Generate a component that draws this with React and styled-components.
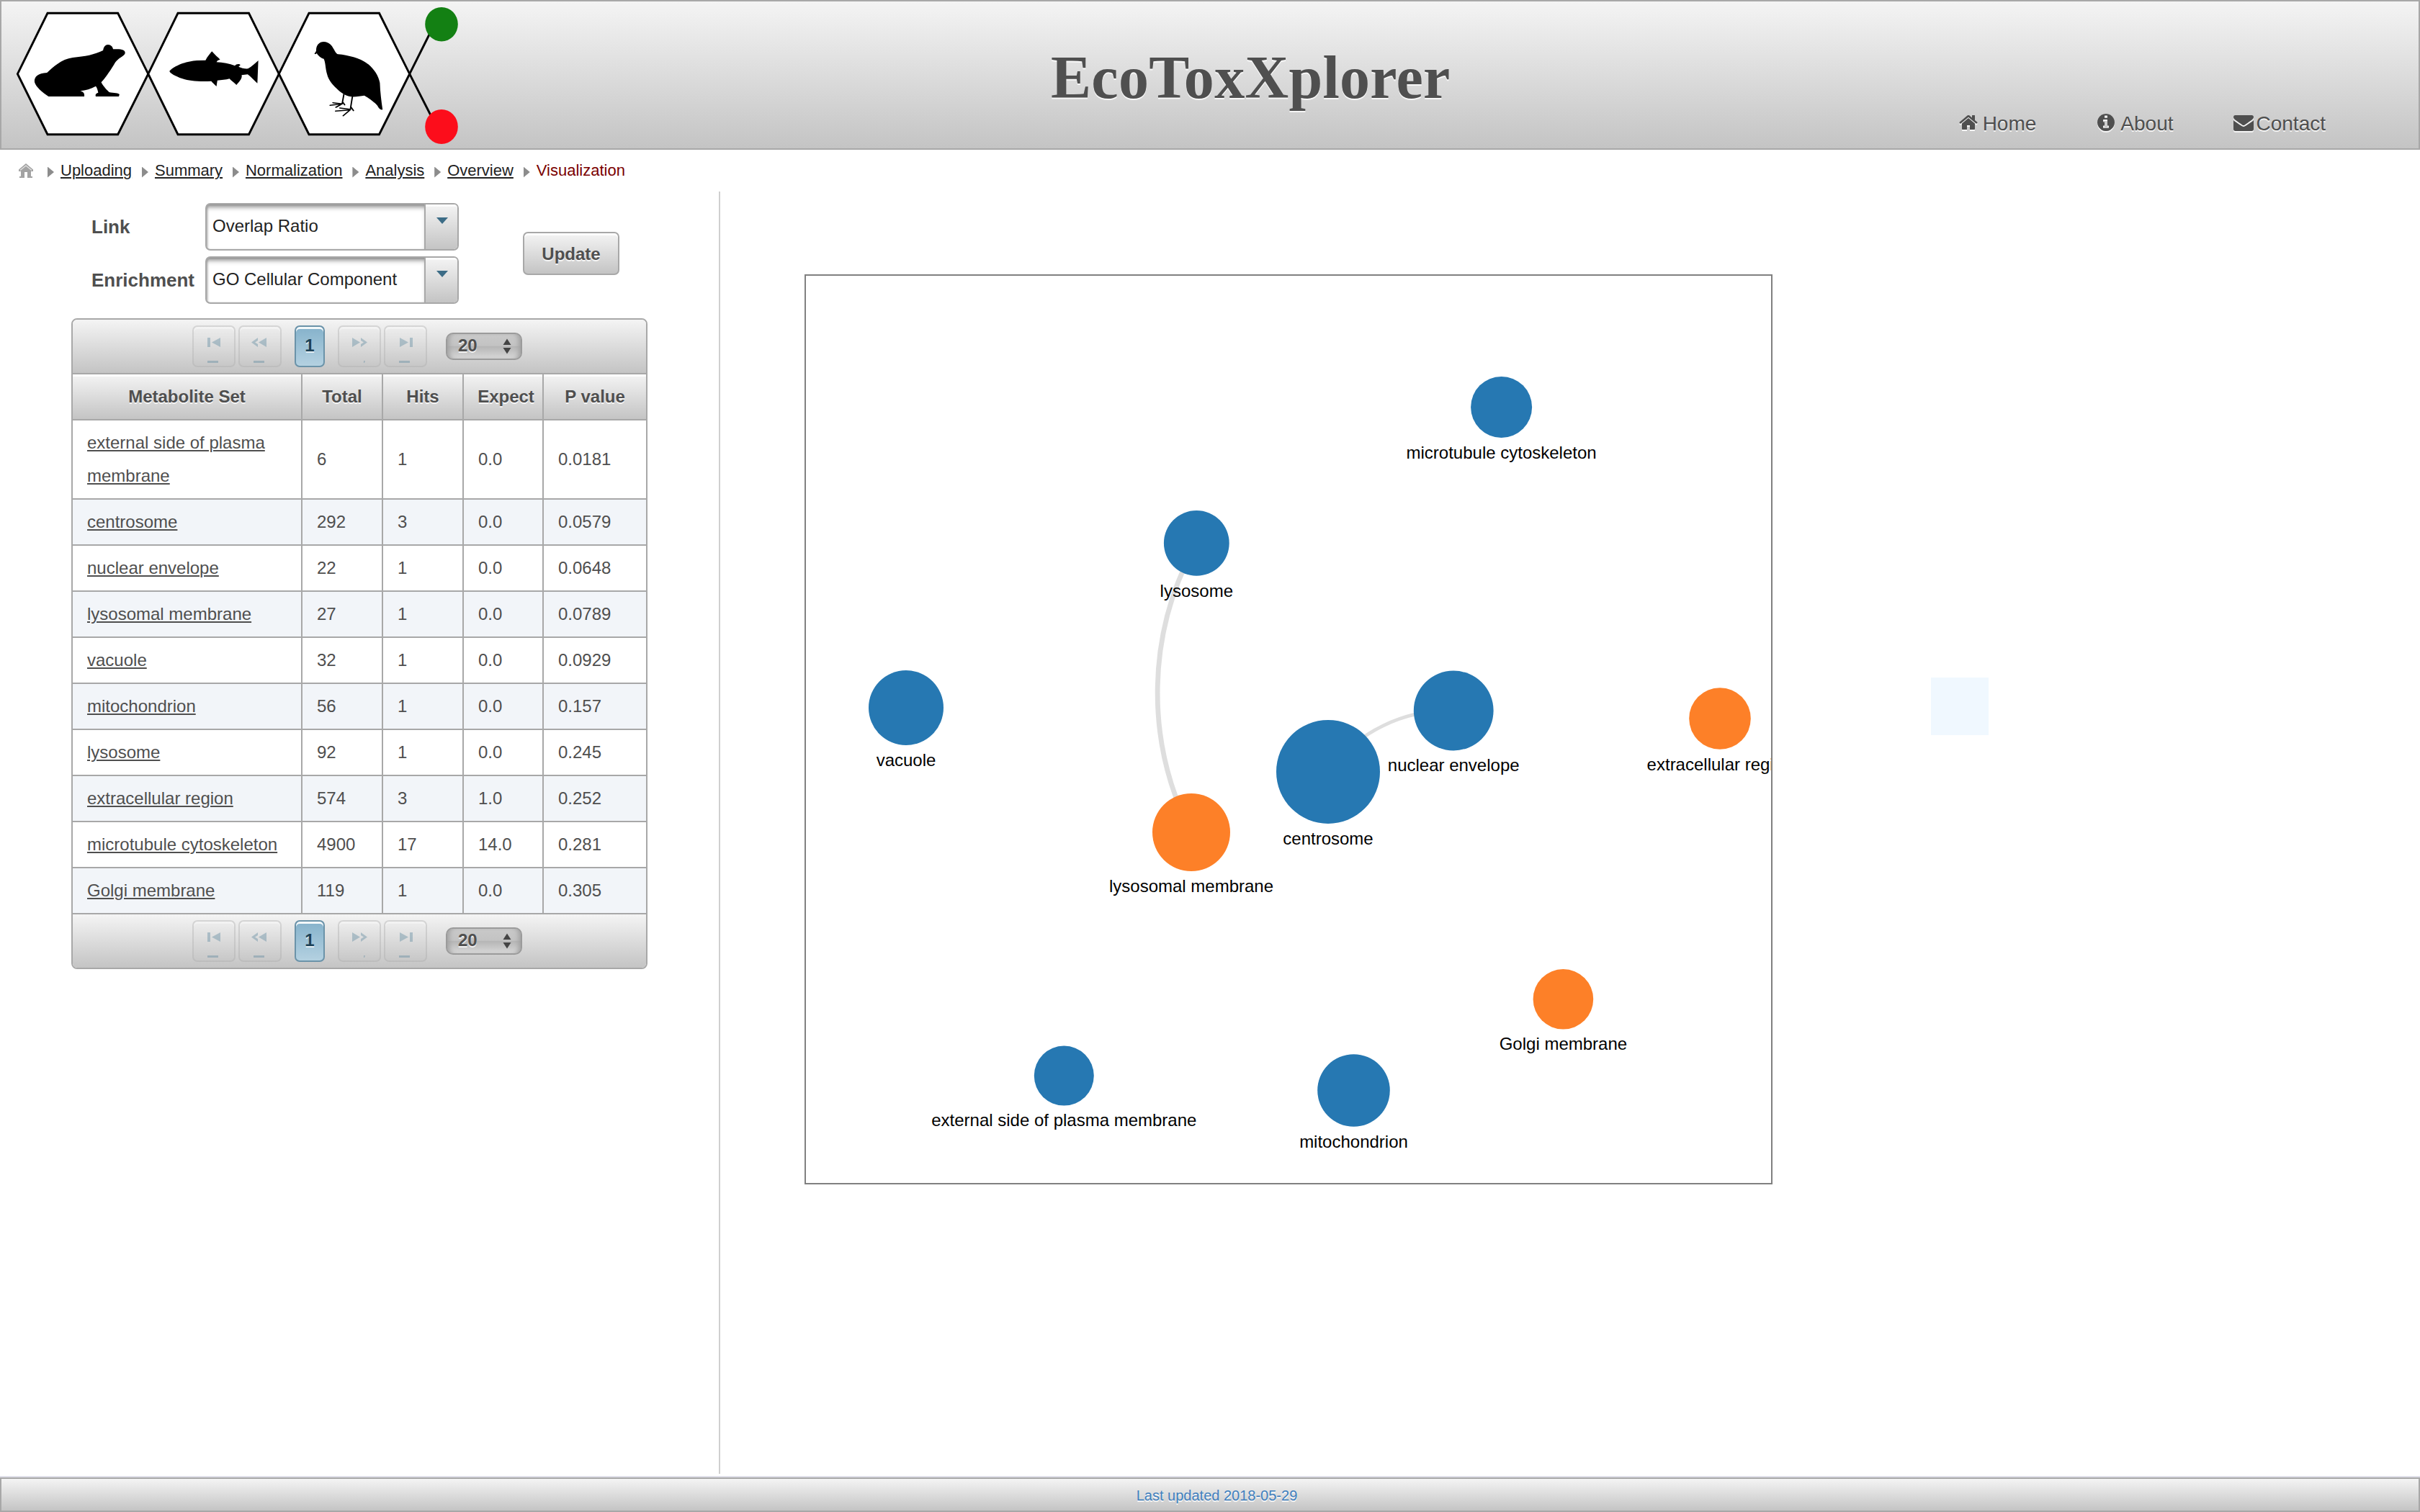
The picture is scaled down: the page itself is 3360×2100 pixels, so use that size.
import React from "react";
import styled, { createGlobalStyle, css } from "styled-components";

const GlobalStyle = createGlobalStyle`
  body {
    margin: 0;
    background: #fff;
    font-family: "Liberation Sans", Arial, sans-serif;
    color: #4f4f4f;
  }
  *, *::before, *::after { box-sizing: border-box; }
`;

const metal = css`
  background: linear-gradient(to bottom, #f4f4f4 0%, #dcdcdc 50%, #c4c4c4 100%);
`;

const Page = styled.div`
  display: flex;
  flex-direction: column;
  height: 2100px;
  overflow: hidden;
`;

const Header = styled.header`
  ${metal}
  display: flex;
  flex: none;
  height: 208px;
  border: 2px solid #a8a8a8;
`;

const LogoArt = styled.svg`
  display: block;
  flex: none;
  width: 650px;
  height: 204px;
`;

const Title = styled.h1`
  margin: 59px 0 0 807px;
  font: bold 84px/94px "Liberation Serif", "Times New Roman", serif;
  letter-spacing: 0.3px;
  color: #4f4f4f;
  text-shadow: 0 2px 0 rgba(255, 255, 255, 0.8);
`;

const Nav = styled.nav`
  display: flex;
  align-items: center;
  height: 32px;
  margin: 152px 129px 0 auto;
`;

const NavLink = styled.a`
  display: flex;
  align-items: center;
  gap: ${(p) => p.$gap}px;
  margin-left: ${(p) => p.$lead}px;
  font-size: 28px;
  line-height: 32px;
  text-shadow: 0 2px 0 rgba(255, 255, 255, 0.8);
`;

const NavText = styled.span`
  padding-top: 4px;
`;

const NavIcon = styled.svg`
  width: 28px;
  height: 28px;
  fill: #4f4f4f;
  filter: drop-shadow(0 2px 0 rgba(255, 255, 255, 0.8));
`;

const Trail = styled.nav`
  display: flex;
  flex: none;
  align-items: center;
  height: 58px;
  padding-left: 26px;
  font-size: 22px;
`;

const HomeMark = styled.svg`
  width: 20px;
  height: 20px;
  margin-right: 20px;
`;

const TrailArrow = styled.span`
  width: 9px;
  height: 15px;
  margin: 4px 9px 0 0;
  background: #8c8c8c;
  clip-path: polygon(0 0, 100% 50%, 0 100%);
`;

const Crumb = styled.a`
  margin-right: 13.9px;
  color: ${(p) => (p.$current ? "#7a0000" : "#222")};
  text-decoration: ${(p) => (p.$current ? "none" : "underline")};
  text-decoration-thickness: 2px;
  text-underline-offset: 2px;
`;

const Main = styled.main`
  display: flex;
  flex: none;
  height: 1784px;
`;

const SidePanel = styled.section`
  flex: none;
  width: 1000px;
  height: 1781px;
  padding: 16px 0 0 99px;
  border-right: 2px solid #cfcfcf;
`;

const Form = styled.div`
  display: flex;
  align-items: center;
  padding-left: 28px;
`;

const Fields = styled.div`
  display: grid;
  grid-template-columns: 158px 352px;
  row-gap: 8px;
  align-items: center;
`;

const Label = styled.label`
  font-size: 26px;
  font-weight: bold;
`;

const Select = styled.div`
  display: flex;
  height: 66px;
  border: 2px solid #a8a8a8;
  border-radius: 7px;
  overflow: hidden;
`;

const SelectText = styled.span`
  flex: 1;
  padding-left: 8px;
  font-size: 24px;
  line-height: 60px;
  color: #222;
  box-shadow: inset 0 7px 7px -4px rgba(90, 90, 90, 0.8), inset 2px 0 3px -1px rgba(90, 90, 90, 0.5);
  white-space: nowrap;
`;

const SelectTrigger = styled.span`
  ${metal}
  width: 46px;
  padding: 18px 0 0 15px;
  border-left: 2px solid #a8a8a8;
  box-shadow: inset 0 3px 0 rgba(255, 255, 255, 0.7);
`;

const Caret = styled.span`
  display: block;
  width: 16px;
  height: 9px;
  background: #3c6c86;
  clip-path: polygon(0 0, 100% 0, 50% 100%);
`;

const Button = styled.button`
  ${metal}
  width: 134px;
  height: 60px;
  margin-left: 89px;
  padding: 1px 0 0;
  border: 2px solid #a8a8a8;
  border-radius: 7px;
  box-shadow: inset 0 3px 0 rgba(255, 255, 255, 0.8);
  color: #4f4f4f;
  font: bold 24px "Liberation Sans", Arial, sans-serif;
  text-shadow: 0 2px 0 rgba(255, 255, 255, 0.8);
`;

const DataTable = styled.div`
  width: 800px;
  margin-top: 20px;
  border: 2px solid #a8a8a8;
  border-radius: 8px;
  overflow: hidden;
  font-size: 24px;
`;

const PagerBar = styled.div`
  ${metal}
  display: flex;
  align-items: center;
  height: 74px;
  padding-left: 166px;
`;

const PagerButton = styled.span`
  width: 60px;
  height: 58px;
  margin-right: ${(p) => p.$after}px;
  border: 2px solid #a8a8a8;
  border-radius: 7px;
  box-shadow: inset 0 3px 0 rgba(255, 255, 255, 0.9);
  background: linear-gradient(#eee, #c4c4c4);
  opacity: 0.36;
`;

const PagerGlyph = styled.svg`
  display: block;
  width: 56px;
  height: 54px;
  fill: #4d7d96;
`;

const PagerPage = styled.span`
  width: 42px;
  height: 58px;
  margin-right: 18px;
  border: 2px solid #6b93a9;
  border-radius: 7px;
  background: linear-gradient(#85b2cb, #b4d1e1);
  box-shadow: inset 0 3px 0 rgba(255, 255, 255, 0.9);
  color: #1c4257;
  font-weight: bold;
  line-height: 52px;
  text-align: center;
  text-shadow: 0 2px 0 rgba(255, 255, 255, 0.7);
`;

const PageSize = styled.span`
  display: flex;
  justify-content: space-between;
  align-items: center;
  width: 106px;
  height: 38px;
  padding: 0 13px 0 15px;
  border: 2px solid #9b9b9b;
  border-radius: 10px;
  background: linear-gradient(#c9c9c9 0%, #c3c3c3 48%, #b5b5b5 50%, #d8d8d8 100%);
  box-shadow: inset 7px 0 6px -4px #a2a2a2, inset -7px 0 6px -4px #a2a2a2;
  font-weight: bold;
  text-shadow: 0 2px 0 rgba(255, 255, 255, 0.8);
`;

const PageSizeValue = styled.span`
  padding-bottom: 3px;
  line-height: 30px;
`;

const PageSizeArrows = styled.svg`
  width: 12px;
  height: 22px;
  fill: #444;
`;

const Row = styled.div`
  display: grid;
  grid-template-columns: 319px 112px 112px 111px 142px;
  border-bottom: 2px solid #a8a8a8;
  background: ${(p) => (p.$striped ? "#f2f5f9" : "#fff")};
`;

const HeadRow = styled(Row)`
  ${metal}
  border-top: 2px solid #a8a8a8;
`;

const HeadCell = styled.div`
  height: 62px;
  padding: 8px 8px;
  border-right: 2px solid #a8a8a8;
  box-shadow: inset 0 3px 0 rgba(255, 255, 255, 0.8);
  font-weight: bold;
  line-height: 45px;
  text-align: center;
  text-indent: ${(p) => p.$indent || 0}px;
  text-shadow: 0 2px 0 rgba(255, 255, 255, 0.8);
  &:last-child { border-right: 0; }
`;

const Cell = styled.div`
  display: flex;
  align-items: center;
  padding: 8px 20px;
  border-right: 2px solid #a8a8a8;
  line-height: 46px;
  &:last-child { border-right: 0; }
`;

const SetLink = styled.a`
  text-decoration: underline;
  text-decoration-thickness: 2px;
  text-underline-offset: 2px;
`;

const Stage = styled.section`
  display: flex;
  align-items: flex-start;
  padding: 115px 0 0 117px;
`;

const Network = styled.svg`
  display: block;
  width: 1344px;
  height: 1264px;
  border: 2px solid #808080;
  font-family: "Liberation Sans", Arial, sans-serif;
  font-size: 24px;
`;

const NodeLabel = styled.text`
  fill: #000;
  text-anchor: middle;
`;

const Edge = styled.path`
  fill: none;
  stroke: #dedede;
`;

const Swatch = styled.div`
  width: 80px;
  height: 80px;
  margin: 560px 0 0 220px;
  background: #f0f8ff;
`;

const Footer = styled.footer`
  ${metal}
  flex: none;
  height: 48px;
  margin-top: 2px;
  padding-left: 19px;
  border: 2px solid #a8a8a8;
  box-shadow: 0 -2px 0 #e0e0ea;
  color: #4080bf;
  font-size: 20px;
  line-height: 46px;
  text-align: center;
  text-shadow: 0 2px 0 rgba(255, 255, 255, 0.8);
`;

const HEXAGONS = [
  "24.4,102.7 66,18.3 163.7,18.3 205.8,102.7 163.7,186.7 66,186.7",
  "205.8,102.7 247,18.3 345.5,18.3 387.3,102.7 345.5,186.7 247,186.7",
  "387.3,102.7 429,18.3 526.5,18.3 568.7,102.7 526.5,186.7 429,186.7",
];

function Logo() {
  return (
    <LogoArt viewBox="2 2 650 204">
      <g fill="#fff" stroke="#000" strokeWidth="2.9">
        {HEXAGONS.map((points) => (
          <polygon key={points} points={points} />
        ))}
        <path fill="none" d="M568.7 102.7L598 44M568.7 102.7L600 164" />
      </g>
      <ellipse cx="613" cy="33.7" rx="22.8" ry="23.8" fill="#138013" />
      <ellipse cx="613" cy="176" rx="22.8" ry="24" fill="#fc0d1b" />
      <g transform="scale(0.42092 0.33333)">
        <path d="M155 303C175 280 202 246 240 240C280 235 312 228 340 210C342 194 348 186 356 186C366 186 372 195 373 205L392 205C408 206 415 214 412 224C406 236 390 242 380 260C368 287 350 320 334 343C338 355 350 372 360 384C375 388 392 387 394 394L392 402L316 402C313 392 319 388 324 386C322 375 320 365 316 359C300 370 282 377 265 379C274 382 280 388 278 402L160 402C140 385 118 362 114 342C112 320 125 305 155 303Z" />
        <path d="M559 296C575 275 610 256 650 252L678 251C684 236 692 225 699 214C708 228 720 240 726 248L718 252L714 259C735 260 757 265 775 274C779 266 790 265 793 271L787 278C795 283 808 287 818 286C830 278 842 263 852 252L849 347C838 335 828 320 817 310L797 313C800 325 790 340 780 354C772 345 762 335 757 328C745 332 730 334 717 335L714 360C706 350 700 343 697 338C650 341 620 335 600 327C580 318 560 305 559 296Z" />
        <path d="M1037 224L1043 212C1042 190 1052 174 1068 174C1085 174 1095 190 1101 205C1106 215 1108 224 1115 226C1150 230 1190 243 1215 268C1235 290 1248 315 1253 345C1254 385 1258 420 1262 457C1255 459 1250 452 1245 440C1235 425 1215 408 1202 398C1190 400 1175 404 1160 403C1145 402 1132 392 1118 378C1100 358 1083 335 1079 310C1073 285 1074 260 1068 245C1058 242 1048 230 1045 222L1041 226Z" />
        <g fill="none" stroke="#000" strokeLinecap="round" strokeWidth="4.6">
          <path d="M1135 388L1129 430M1129 433L1098 428M1129 433L1089 439M1128 433L1108 447M1131 426L1137 437" />
          <path d="M1163 398L1156 453M1154 455L1121 450M1154 458L1107 463M1156 457L1132 482M1158 447L1166 461" />
        </g>
      </g>
    </LogoArt>
  );
}

const ICON_PATHS = {
  home: "M1408 992v480q0 26-19 45t-45 19h-384v-384h-256v384h-384q-26 0-45-19t-19-45v-480q0-1 .5-3t.5-3l575-474 575 474q1 2 1 6zm223-69l-62 74q-8 9-21 11h-3q-13 0-21-7l-692-577-692 577q-12 8-24 7-13-2-21-11l-62-74q-8-10-7-23.500t11-21.500l719-599q32-26 76-26t76 26l244 204v-195q0-14 9-23t23-9h192q14 0 23 9t9 23v408l219 182q10 8 11 21.500t-7 23.500z",
  info: "M1152 1376v-160q0-14-9-23t-23-9h-96v-512q0-14-9-23t-23-9h-320q-14 0-23 9t-9 23v160q0 14 9 23t23 9h96v320h-96q-14 0-23 9t-9 23v160q0 14 9 23t23 9h448q14 0 23-9t9-23zm-128-896v-160q0-14-9-23t-23-9h-192q-14 0-23 9t-9 23v160q0 14 9 23t23 9h192q14 0 23-9t9-23zm640 416q0 209-103 385.500t-279.500 279.500-385.500 103-385.500-103-279.500-279.500-103-385.500 103-385.500 279.500-279.500 385.500-103 385.500 103 279.500 279.500 103 385.500z",
  mail: "M1792 710v794q0 66-47 113t-113 47h-1472q-66 0-113-47t-47-113v-794q44 49 101 87 362 246 497 345 57 42 92.500 65.500t94.500 48 110 24.500h2q51 0 110-24.500t94.500-48 92.500-65.500q170-123 498-345 57-39 100-87zm0-294q0 79-49 151t-122 123q-376 261-468 325-10 7-42.500 31t-54 38.500-52 32.500-57.500 27-50 9h-2q-23 0-50-9t-57.500-27-52-32.500-54-38.500-42.500-31q-91-64-262-182.500t-205-142.500q-62-42-117-115.500t-55-136.500q0-78 41.500-130t118.500-52h1472q65 0 112.500 47t47.500 113z",
};

const NAV = [
  { icon: "home", text: "Home", gap: 5, lead: 0 },
  { icon: "info", text: "About", gap: 6, lead: 83 },
  { icon: "mail", text: "Contact", gap: 4, lead: 83 },
];

const CRUMBS = ["Uploading", "Summary", "Normalization", "Analysis", "Overview", "Visualization"];

const COLUMNS = ["Metabolite Set", "Total", "Hits", "Expect", "P value"];

const ROWS = [
  ["external side of plasma membrane", "6", "1", "0.0", "0.0181"],
  ["centrosome", "292", "3", "0.0", "0.0579"],
  ["nuclear envelope", "22", "1", "0.0", "0.0648"],
  ["lysosomal membrane", "27", "1", "0.0", "0.0789"],
  ["vacuole", "32", "1", "0.0", "0.0929"],
  ["mitochondrion", "56", "1", "0.0", "0.157"],
  ["lysosome", "92", "1", "0.0", "0.245"],
  ["extracellular region", "574", "3", "1.0", "0.252"],
  ["microtubule cytoskeleton", "4900", "17", "14.0", "0.281"],
  ["Golgi membrane", "119", "1", "0.0", "0.305"],
];

const BLUE = "#2678b2";
const ORANGE = "#fd8028";

const NODES = [
  { name: "microtubule cytoskeleton", x: 2084.6, y: 565.4, r: 42.5, fill: BLUE },
  { name: "lysosome", x: 1661.3, y: 754.4, r: 45.4, fill: BLUE },
  { name: "vacuole", x: 1258, y: 983, r: 52, fill: BLUE },
  { name: "nuclear envelope", x: 2018.2, y: 987, r: 55.4, fill: BLUE },
  { name: "centrosome", x: 1844, y: 1071.9, r: 72, fill: BLUE },
  { name: "lysosomal membrane", x: 1654, y: 1156, r: 54, fill: ORANGE },
  { name: "extracellular region", x: 2388, y: 998, r: 42.8, fill: ORANGE },
  { name: "Golgi membrane", x: 2170.4, y: 1387.8, r: 41.8, fill: ORANGE },
  { name: "external side of plasma membrane", x: 1477.3, y: 1494.1, r: 41.5, fill: BLUE },
  { name: "mitochondrion", x: 1879.5, y: 1514.5, r: 50.3, fill: BLUE },
];

const PAGER_SHAPES = {
  first: "M19 15h4v13h-4zM37 15v13l-12-6.500zM19 47h15v3h-15z",
  prev: "M37 15v13l-11-6.500zM25 15l-9 6.500 9 6.500v-4l-4-2.500 4-2.500zM19 47h15v3h-15z",
  next: "M18 15v13l11-6.500zM30 15l9 6.500-9 6.500v-4l4-2.500-4-2.500zM34 47h2l-1 3h-1z",
  last: "M20 15v13l12-6.500zM34 15h4v13h-4zM19 47h15v3h-15z",
};

function PagerStep({ kind, after }) {
  return (
    <PagerButton $after={after}>
      <PagerGlyph viewBox="0 0 56 54">
        <path d={PAGER_SHAPES[kind]} />
      </PagerGlyph>
    </PagerButton>
  );
}

function Pager() {
  return (
    <PagerBar>
      <PagerStep kind="first" after={4} />
      <PagerStep kind="prev" after={18} />
      <PagerPage>1</PagerPage>
      <PagerStep kind="next" after={4} />
      <PagerStep kind="last" after={26} />
      <PageSize>
        <PageSizeValue>20</PageSizeValue>
        <PageSizeArrows viewBox="0 0 12 22">
          <path d="M6 0.500L11.500 9H0.500zM6 21.500L11.500 13H0.500z" />
        </PageSizeArrows>
      </PageSize>
    </PagerBar>
  );
}

function Dropdown({ value }) {
  return (
    <Select>
      <SelectText>{value}</SelectText>
      <SelectTrigger>
        <Caret />
      </SelectTrigger>
    </Select>
  );
}

export default function App() {
  return (
    <Page>
      <GlobalStyle />
      <Header>
        <Logo />
        <Title>EcoToxXplorer</Title>
        <Nav>
          {NAV.map((item) => (
            <NavLink key={item.text} $gap={item.gap} $lead={item.lead}>
              <NavIcon viewBox="0 0 1792 1792">
                <path d={ICON_PATHS[item.icon]} />
              </NavIcon>
              <NavText>{item.text}</NavText>
            </NavLink>
          ))}
        </Nav>
      </Header>

      <Trail>
        <HomeMark viewBox="0 0 20 20">
          <path d="M10 0L20 8.500V11H17V18H19V20H12V12H8V20H1V18H3V11H0V8.500Z" fill="#a3a3a3" />
          <path d="M2 9.500L10 3L18 9.500" fill="none" stroke="#e4e4e4" strokeWidth="1.300" />
        </HomeMark>
        {CRUMBS.map((name, i) => (
          <React.Fragment key={name}>
            <TrailArrow />
            <Crumb $current={i === CRUMBS.length - 1}>{name}</Crumb>
          </React.Fragment>
        ))}
      </Trail>

      <Main>
        <SidePanel>
          <Form>
            <Fields>
              <Label>Link</Label>
              <Dropdown value="Overlap Ratio" />
              <Label>Enrichment</Label>
              <Dropdown value="GO Cellular Component" />
            </Fields>
            <Button>Update</Button>
          </Form>

          <DataTable>
            <Pager />
            <HeadRow>
              {COLUMNS.map((name) => (
                <HeadCell key={name} $indent={name === "Expect" ? 8 : 0}>
                  {name}
                </HeadCell>
              ))}
            </HeadRow>
            {ROWS.map(([name, ...values], i) => (
              <Row key={name} $striped={i % 2 === 1}>
                <Cell>
                  <SetLink>{name}</SetLink>
                </Cell>
                {values.map((value, j) => (
                  <Cell key={j}>{value}</Cell>
                ))}
              </Row>
            ))}
            <Pager />
          </DataTable>
        </SidePanel>

        <Stage>
          <Network viewBox="1119 383 1340 1260">
            <Edge d="M1661.3 754.4A425 425 0 0 0 1654 1156" strokeWidth="6.800" />
            <Edge d="M1844 1071.900A207 207 0 0 1 2018.200 987" strokeWidth="4.800" />
            {NODES.map((n) => (
              <circle key={n.name} cx={n.x} cy={n.y} r={n.r} fill={n.fill} />
            ))}
            {NODES.map((n) => (
              <NodeLabel key={n.name} x={n.x} y={n.y + n.r + 28.8}>
                {n.name}
              </NodeLabel>
            ))}
          </Network>
          <Swatch />
        </Stage>
      </Main>

      <Footer>Last updated 2018-05-29</Footer>
    </Page>
  );
}
